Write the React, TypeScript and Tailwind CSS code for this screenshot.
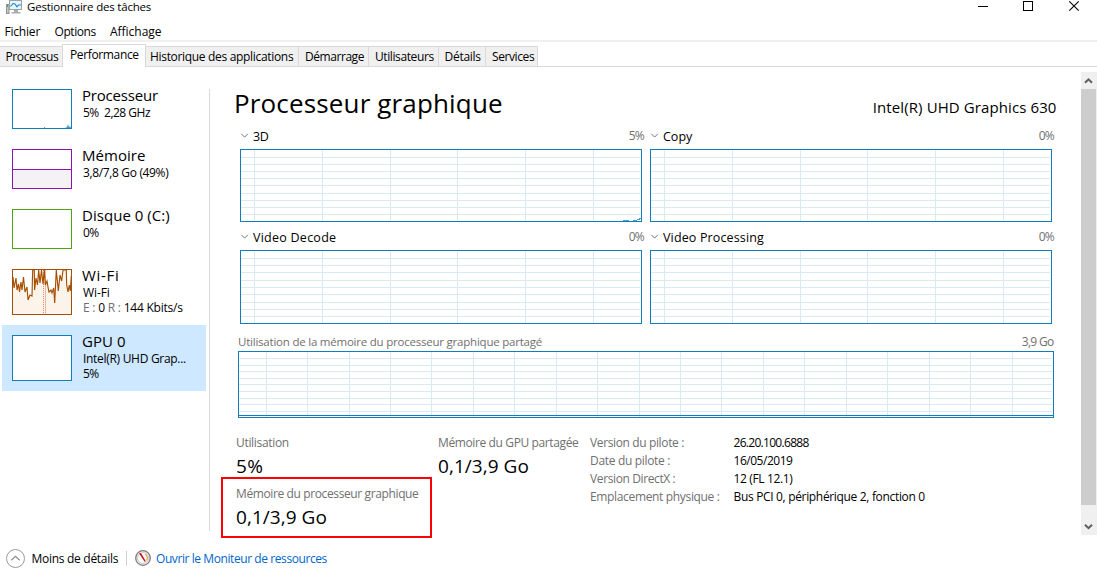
import React, { type ReactNode } from 'react';

function Grid({ w, h, vs, hs, children }: { w: number; h: number; vs: number[]; hs: number[]; children?: ReactNode }) {
  return (
    <svg width={w} height={h} className="block" shapeRendering="crispEdges">
      <g fill="#d9eaf4">
        {hs.map((y) => <rect key={y} x={1} y={y} width={w - 3} height={1} />)}
        {vs.map((x) => <rect key={x} x={x} y={1} width={1} height={h - 2} />)}
      </g>
      {children}
      <rect x={0.5} y={0.5} width={w - 1} height={h - 1} fill="none" stroke="#117dbb" />
    </svg>
  );
}

const engineColumns = [14, 82, 150, 217, 285, 353];
const firstRows = [8, 15, 22, 29, 36, 44, 51, 58, 65];
const secondRows = [8, 15, 22, 30, 37, 44, 52, 59, 66];
const memoryColumns = [28, 69, 111, 152, 193, 235, 276, 318, 359, 401, 442, 483, 525, 566, 608, 649, 691, 732, 774];
const memoryRows = [7, 14, 20, 27, 33, 40, 47, 53, 60];

function Engine({ name, value, h, rows, spacing, children }: { name: string; value: string; h: number; rows: number[]; spacing: string; children?: ReactNode }) {
  return (
    <div className="w-[402px]">
      <div className="flex h-[21px] items-start">
        <svg width="9" height="6" className="mt-[5px] shrink-0" fill="none" stroke="#767676" strokeWidth="1">
          <path d="M1.3 0.8 L4.6 4.1 L7.9 0.8" />
        </svg>
        <span className={`ml-[4px] text-[12.5px] leading-[17px] ${spacing}`}>{name}</span>
        <span className="-mr-[2px] ml-auto text-[12px] leading-[15px] tracking-[-0.8px] text-[#707070]">{value}</span>
      </div>
      <Grid w={402} h={h} vs={engineColumns} hs={rows}>{children}</Grid>
    </div>
  );
}

function Tab({ children, className }: { children: ReactNode; className: string }) {
  return (
    <div className={`h-[21px] shrink-0 border-t border-r border-b border-[#d9d9d9] bg-[#f0f0f0] pt-[2px] leading-[15px] ${className}`}>
      {children}
    </div>
  );
}

function SideItem({ name, spacing, thumb, tall, selected, children }: { name: string; spacing: string; thumb: ReactNode; tall?: boolean; selected?: boolean; children: ReactNode }) {
  return (
    <div className={`ml-[2px] flex w-[204px] shrink-0 pl-[10px] ${tall ? 'h-[66px]' : 'h-[60px]'} ${selected ? 'bg-[#cde8ff]' : ''}`}>
      <div className="mt-[10px] w-[60px] shrink-0">{thumb}</div>
      <div className="ml-[10px] mt-[6px] whitespace-nowrap leading-[15px]">
        <div className={`text-[15px] leading-[20px] ${spacing}`}>{name}</div>
        <div className="pl-px">{children}</div>
      </div>
    </div>
  );
}

function Thumb({ h, color, children }: { h: number; color: string; children?: ReactNode }) {
  return (
    <svg width="60" height={h} className="block">
      <rect x="0.5" y="0.5" width="59" height={h - 1} fill="#fff" />
      {children}
      <rect x="0.5" y="0.5" width="59" height={h - 1} fill="none" stroke={color} />
    </svg>
  );
}

const wifi = '1,8 2,19 4,9 5,21 6.5,15 7.5,23 9,13 10,21 11.5,8 13,23 15,18 16,31 18,26 20,27 20.7,1 22.3,1 22.6,21 24,9 25.5,16 26.7,1 28,14 29.5,1 31,15 32.3,1 33.3,16 35,12 36,18 37,23 39,21 40,24 41.7,19 42.7,34 44.3,1 46.3,22 48,6 49.7,12 51,1 54.3,1 54.7,16 56,23 57.3,16 58.3,22 59.3,7';

const details: [string, string, string, string][] = [
  ['Version du pilote :', 'tracking-[-0.37px]', '26.20.100.6888', 'tracking-[-0.7px]'],
  ['Date du pilote :', 'tracking-[-0.32px]', '16/05/2019', 'tracking-[-0.47px]'],
  ['Version DirectX :', 'tracking-[-0.38px]', '12 (FL 12.1)', 'tracking-[-0.36px]'],
  ['Emplacement physique :', 'tracking-[-0.34px]', 'Bus PCI 0, périphérique 2, fonction 0', 'tracking-[-0.33px]'],
];

export default function App() {
  return (
    <div className="flex h-[580px] w-[1097px] flex-col overflow-hidden bg-white font-['Open_Sans',sans-serif] text-[12px] text-black">
      <header className="flex h-[20px] shrink-0 pl-[6px]">
        <svg width="17" height="15" className="shrink-0">
          <rect x="0.5" y="4.5" width="2.5" height="9" fill="#c4c4c4" stroke="#949494" />
          <rect x="1" y="5" width="1" height="2" fill="#37b54a" />
          <rect x="3.5" y="0.5" width="12" height="9" fill="#e7f5fd" stroke="#9ba0a4" />
          <path d="M4.5 6.5 L7 3.5 L9 4 L11 6.8 L12.5 5 L15 5" fill="none" stroke="#1686c4" strokeWidth="1.1" />
          <path d="M8 10h4v2h2.5v1.5h-9v-1.5h2.5z" fill="#a7adb1" />
        </svg>
        <span className="-mt-px ml-[4px] text-[11.5px] leading-[15px] tracking-[-0.2px]">Gestionnaire des tâches</span>
        <svg width="102" height="14" className="ml-auto mr-[17px]" fill="none" stroke="#000">
          <path d="M0 6.5H10" shapeRendering="crispEdges" />
          <rect x="45.5" y="1.5" width="9" height="9" shapeRendering="crispEdges" />
          <path d="M91.3 1.3 L100.7 10.7 M100.7 1.3 L91.3 10.7" strokeWidth="1.1" />
        </svg>
      </header>

      <nav className="flex h-[20px] shrink-0 items-start pl-[4.5px] pt-[4px] leading-[15px]">
        <span className="w-[50px] tracking-[-0.2px]">Fichier</span>
        <span className="w-[55.5px] tracking-[-0.42px]">Options</span>
        <span className="tracking-[-0.02px]">Affichage</span>
      </nav>
      <div className="h-[2px] shrink-0 bg-[#f0f0f0]" />

      <div className="flex h-[25px] shrink-0 items-end whitespace-nowrap">
        <Tab className="w-[62px] border-r-0 pl-[5.5px] tracking-[-0.38px]">Processus</Tab>
        <div className="h-[23px] w-[84px] shrink-0 border-x border-t border-[#d9d9d9] pl-[7px] pt-[2px] leading-[15px] tracking-[-0.36px]">Performance</div>
        <Tab className="w-[153px] pl-[4px] tracking-[-0.32px]">Historique des applications</Tab>
        <Tab className="w-[70px] pl-[6px] tracking-[-0.44px]">Démarrage</Tab>
        <Tab className="w-[70px] pl-[6px] tracking-[-0.4px]">Utilisateurs</Tab>
        <Tab className="w-[47px] pl-[5.5px] tracking-[-0.27px]">Détails</Tab>
        <Tab className="w-[52px] pl-[6px] tracking-[-0.4px]">Services</Tab>
        <div className="h-px grow bg-[#d9d9d9]" />
      </div>

      <div className="flex h-[472px] shrink-0">
        <aside className="flex w-[209px] shrink-0 flex-col pt-[12px]">
          <SideItem name="Processeur" spacing="tracking-[-0.19px]" thumb={
            <Thumb h={40} color="#117dbb"><path d="M32 39v-1h1v1zM53 39l2-1 1-3 1 3 1-1 1 2z" fill="#4a9ccb" /></Thumb>
          }><span className="tracking-[-0.5px]">5%&nbsp; 2,28 GHz</span></SideItem>
          <SideItem name="Mémoire" spacing="tracking-[0.04px]" thumb={
            <Thumb h={40} color="#8b12ae"><rect x="1" y="20" width="58" height="19" fill="#f4f2f4" /><rect x="1" y="20" width="58" height="1" fill="#8b12ae" /></Thumb>
          }><span className="tracking-[-0.35px]">3,8/7,8 Go (49%)</span></SideItem>
          <SideItem name="Disque 0 (C:)" spacing="tracking-[0.04px]" thumb={<Thumb h={40} color="#4da60c" />}>
            <span className="tracking-[-0.7px]">0%</span>
          </SideItem>
          <SideItem tall name="Wi-Fi" spacing="tracking-[0.7px]" thumb={
            <Thumb h={46} color="#a74f01">
              <polygon points={`1,45 ${wifi} 59,45`} fill="#fcf3eb" />
              <path d="M31.5 1V45" stroke="#d98a68" strokeDasharray="1 1" />
              <path d="M33.5 1V45" stroke="#efb7a0" />
              <polyline points={wifi} fill="none" stroke="#a74f01" strokeWidth="1.15" />
            </Thumb>
          }>
            <div className="tracking-[-0.1px]">Wi-Fi</div>
            <div className="tracking-[-0.22px]"><span className="text-[#707070]">E :</span> 0 <span className="text-[#707070]">R :</span>&nbsp;144 Kbits/s</div>
          </SideItem>
          <SideItem tall selected name="GPU 0" spacing="tracking-[0.06px]" thumb={<Thumb h={46} color="#117dbb" />}>
            <div className="tracking-[-0.3px]">Intel(R) UHD Grap...</div>
            <div className="tracking-[-0.7px]">5%</div>
          </SideItem>
        </aside>
        <div className="mt-[22px] h-[442px] w-px shrink-0 bg-[#d9d9d9]" />

        <main className="flex w-[871px] shrink-0 flex-col whitespace-nowrap pt-[18px]">
          <div className="flex h-[36px] shrink-0 justify-between pl-[24px] pr-[24.5px]">
            <h1 className="text-[26px] leading-[36px] tracking-[0.15px]">Processeur graphique</h1>
            <h2 className="mt-[12px] text-[15px] leading-[20px] tracking-[0.1px]">Intel(R) UHD Graphics 630</h2>
          </div>
          <div className="flex gap-[8px] pl-[30px] pt-[7px]">
            <Engine name="3D" value="5%" h={73} rows={firstRows} spacing="tracking-[-0.5px]">
              <path d="M383 71h6v1h-6zM393 71h4v1h-4zM397 70h3v1h-3zM399 69h2v1h-2z" fill="#4a9ccb" />
            </Engine>
            <Engine name="Copy" value="0%" h={73} rows={firstRows} spacing="tracking-normal" />
          </div>
          <div className="flex gap-[8px] pl-[30px] pt-[7px]">
            <Engine name="Video Decode" value="0%" h={74} rows={secondRows} spacing="tracking-[0.25px]" />
            <Engine name="Video Processing" value="0%" h={74} rows={secondRows} spacing="tracking-[0.14px]" />
          </div>
          <div className="pl-[28px] pt-[10px]">
            <div className="flex h-[17px] w-[815.5px] justify-between leading-[15px] text-[#707070]">
              <span className="text-[11.5px] tracking-[-0.22px]">Utilisation de la mémoire du processeur graphique partagé</span>
              <span className="tracking-[-0.7px]">3,9 Go</span>
            </div>
            <Grid w={816} h={67} vs={memoryColumns} hs={memoryRows}>
              <rect x={1} y={64} width={814} height={1} fill="#117dbb" />
            </Grid>
          </div>

          <div className="flex items-start pl-[11px] pt-[17px] leading-[15px]">
            <div className="w-[217px] shrink-0">
              <div className="h-[42px] pl-[15px]">
                <div className="tracking-[-0.32px] text-[#707070]">Utilisation</div>
                <div className="mt-[3px] text-[19px] leading-[26px] tracking-[0.5px]">5%</div>
              </div>
              <div className="h-[61px] w-[211px] border-2 border-[#f00] pl-[13px] pt-[7px]">
                <div className="tracking-[-0.38px] text-[#707070]">Mémoire du processeur graphique</div>
                <div className="mt-[3px] text-[19px] leading-[26px] tracking-[0.05px]">0,1/3,9 Go</div>
              </div>
            </div>
            <div className="w-[152px] shrink-0">
              <div className="tracking-[-0.38px] text-[#707070]">Mémoire du GPU partagée</div>
              <div className="mt-[3px] text-[19px] leading-[26px] tracking-[0.05px]">0,1/3,9 Go</div>
            </div>
            <div className="flex flex-col gap-[3px]">
              {details.map(([label, labelSpacing, value, valueSpacing]) => (
                <div key={label} className="flex">
                  <span className={`w-[143.5px] text-[#707070] ${labelSpacing}`}>{label}</span>
                  <span className={valueSpacing}>{value}</span>
                </div>
              ))}
            </div>
          </div>
        </main>

        <div className="mt-[5px] flex h-[463px] w-[16px] shrink-0 flex-col bg-[#f0f0f0]">
          <svg width="16" height="17" className="shrink-0" fill="none" stroke="#606060" strokeWidth="2">
            <path d="M4 10.8 L7.5 7.3 L11 10.8" />
          </svg>
          <div className="h-[416px] w-[15px] bg-[#cdcdcd]" />
          <svg width="16" height="30" className="shrink-0" fill="none" stroke="#606060" strokeWidth="2">
            <path d="M4 19.7 L7.5 23.2 L11 19.7" />
          </svg>
        </div>
      </div>

      <footer className="flex items-start pl-[6px] pt-[10px] leading-[15px]">
        <svg width="19" height="19" fill="none">
          <circle cx="9.5" cy="9.5" r="9" stroke="#9a9a9a" />
          <path d="M5.3 11.3 L9.5 7.3 L13.7 11.3" stroke="#8f8f8f" strokeWidth="1.2" />
        </svg>
        <span className="ml-[6.5px] mt-[2px] w-[94.5px] tracking-[-0.29px]">Moins de détails</span>
        <div className="mt-[2px] h-[15px] w-px bg-[#d0d0d0]" />
        <svg width="16" height="16" className="ml-[8px] mt-px">
          <circle cx="8" cy="8" r="7.3" fill="#eee" stroke="#7b7b7b" strokeWidth="1.3" />
          <circle cx="8" cy="8" r="5.4" fill="#fafafa" stroke="#c2c2c2" strokeWidth="0.8" />
          <path d="M10 4 A4.5 4.5 0 0 1 11.5 10.5" fill="none" stroke="#f0a050" strokeWidth="1.2" />
          <path d="M4 3.2 L6 3 L10.8 11.2 L9.6 11.8z" fill="#c81414" />
        </svg>
        <span className="ml-[5px] mt-[2px] tracking-[-0.42px] text-[#0066cc]">Ouvrir le Moniteur de ressources</span>
      </footer>
    </div>
  );
}
